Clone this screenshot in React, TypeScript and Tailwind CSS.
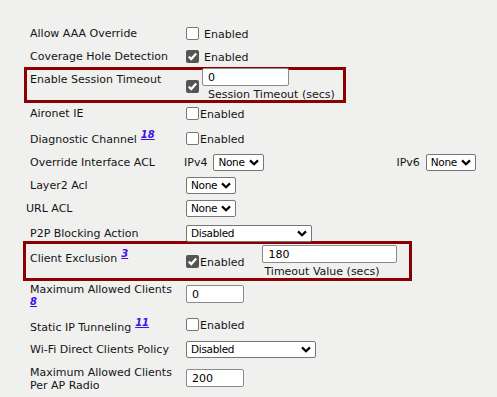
import type { ReactNode } from 'react'

function Check({ checked, className = '' }: { checked?: boolean; className?: string }) {
  if (checked) {
    return (
      <span className={`flex h-[13px] w-[13px] shrink-0 items-center justify-center rounded-[2px] bg-[#555555] ${className}`}>
        <svg viewBox="0 0 13 13" className="h-[13px] w-[13px]">
          <path d="M2.8 6.6 L5.3 9.1 L10.2 3.6" fill="none" stroke="#fff" strokeWidth="2.2" />
        </svg>
      </span>
    )
  }
  return <span className={`h-[13px] w-[13px] shrink-0 rounded-[2px] border border-[#767676] bg-white ${className}`} />
}

// footnote link; low = sits on the line below a label
function Sup({ n, low }: { n: string; low?: boolean }) {
  return (
    <a
      className={`relative text-[10px] font-bold italic text-[#3d12e8] underline ${
        low ? '-top-[1px] ml-0' : '-top-[5px] ml-[4px]'
      }`}
    >
      {n}
    </a>
  )
}

function Select({ value, w }: { value: string; w: string }) {
  return (
    <div className={`flex h-[17px] shrink-0 items-center justify-between rounded-[2px] border border-[#767676] bg-white pl-[4px] pr-[4px] text-[10.5px] text-black ${w}`}>
      <span className="tracking-[-0.3px]">{value}</span>
      <svg viewBox="0 0 10 7" className="h-[7px] w-[10px]">
        <path d="M1 1.4 L5 5.3 L9 1.4" fill="none" stroke="#000" strokeWidth="2.2" />
      </svg>
    </div>
  )
}

function Field({ value, w, className = '' }: { value: string; w: string; className?: string }) {
  return (
    <input
      readOnly
      value={value}
      className={`h-[18px] rounded-[2px] border border-[#8a8a8a] bg-white px-[5px] text-[11px] text-black outline-none ${w} ${className}`}
    />
  )
}

function Row({
  label,
  className = '',
  valueClass = '',
  children,
}: {
  label: ReactNode
  className?: string
  valueClass?: string
  children?: ReactNode
}) {
  return (
    <div className={`flex h-[18px] items-center ${className}`}>
      <div className="w-[156px] shrink-0">{label}</div>
      <div className={`flex items-center ${valueClass}`}>{children}</div>
    </div>
  )
}

export default function App() {
  return (
    <div className="min-h-[397px] w-[497px] bg-[#f0f0ee] pl-[30px] pt-[24px] font-['DejaVu_Sans',Verdana,sans-serif] text-[11px] leading-[13px] text-[#141418]">
      <Row label="Allow AAA Override">
        <Check />
        <span className="ml-[5px] pt-[3px]">Enabled</span>
      </Row>
      <Row label="Coverage Hole Detection" className="mt-[5px]">
        <Check checked />
        <span className="ml-[5px] pt-[3px]">Enabled</span>
      </Row>

      <div className="-ml-[6px] mt-[2px] flex h-[36px] w-[322px] border-[3px] border-[#8b0000] pl-[3px]">
        <div className="w-[156px] shrink-0 pt-[3px]">Enable Session Timeout</div>
        <div className="flex items-start">
          <Check checked className="mt-[10px]" />
          <div className="-mt-[2px] ml-[3px] flex flex-col">
            <Field value="0" w="w-[87px]" />
            <span className="mt-[2px] pl-[6px]">Session Timeout (secs)</span>
          </div>
        </div>
      </div>

      <Row label="Aironet IE" className="mt-[1px]">
        <Check />
        <span className="ml-[1px] pt-[2px]">Enabled</span>
      </Row>
      <Row label={<>Diagnostic Channel<Sup n="18" /></>} className="mt-[8px]" valueClass="-mt-[2px]">
        <Check />
        <span className="ml-[1px] pt-[2px]">Enabled</span>
      </Row>
      <Row label="Override Interface ACL" className="mt-[5px]">
        <span className="-ml-[2px]">IPv4</span>
        <div className="ml-[6px]">
          <Select value="None" w="w-[51px]" />
        </div>
        <span className="ml-[132px]">IPv6</span>
        <div className="ml-[6px]">
          <Select value="None" w="w-[50px]" />
        </div>
      </Row>
      <Row label="Layer2 Acl" className="mt-[5px]">
        <Select value="None" w="w-[50px]" />
      </Row>
      <Row label={<span className="-ml-[4px]">URL ACL</span>} className="mt-[5px]">
        <Select value="None" w="w-[50px]" />
      </Row>
      <Row label="P2P Blocking Action" className="mt-[7px]">
        <Select value="Disabled" w="w-[126px]" />
      </Row>

      <div className="-ml-[7px] -mt-[1px] flex h-[40px] w-[389px] border-[3px] border-[#8b0000] pl-[4px]">
        <div className="w-[156px] shrink-0 pt-[8px]">
          Client Exclusion<Sup n="3" />
        </div>
        <div className="flex items-start">
          <Check checked className="mt-[11px]" />
          <span className="ml-[1px] mt-[12px]">Enabled</span>
          <div className="ml-[18px] mt-[1px] flex flex-col">
            <Field value="180" w="w-[135px]" />
            <span className="mt-[2px] pl-[2px]">Timeout Value (secs)</span>
          </div>
        </div>
      </div>

      <div className="mt-[2px] flex items-start">
        <div className="w-[156px] shrink-0">
          Maximum Allowed Clients
          <br />
          <Sup n="8" low />
        </div>
        <Field value="0" w="w-[58px]" className="mt-[2px]" />
      </div>

      <Row label={<>Static IP Tunneling<Sup n="11" /></>} className="mt-[9px]" valueClass="-mt-[6px]">
        <Check />
        <span className="ml-[1px] pt-[2px]">Enabled</span>
      </Row>
      <Row label="Wi-Fi Direct Clients Policy" className="mt-[4px]">
        <Select value="Disabled" w="w-[130px]" />
      </Row>

      <div className="mt-[8px] flex items-start pb-[5px]">
        <div className="w-[156px] shrink-0">
          Maximum Allowed Clients
          <br />
          Per AP Radio
        </div>
        <Field value="200" w="w-[58px]" className="mt-[3px]" />
      </div>
    </div>
  )
}
